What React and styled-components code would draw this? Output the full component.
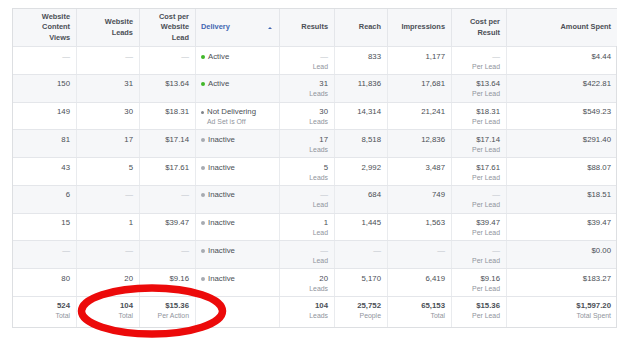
import React from "react";
import styled, { createGlobalStyle } from "styled-components";

const Global = createGlobalStyle`
  html, body { margin: 0; padding: 0; background: #fff; }
  body { font-family: "Liberation Sans", Arial, sans-serif; color: #4b4f56; }
`;

const COLS = "64px 63px 56px 84px 55px 53px 64px 55px 110px";

const Page = styled.div`
  position: relative;
  width: 636px;
  height: 343px;
  padding: 8px 0 0 12px;
  box-sizing: border-box;
`;

const Table = styled.div`
  width: 605px;
  border: 1px solid #dddfe2;
  box-sizing: border-box;
`;

const Row = styled.div`
  display: grid;
  grid-template-columns: ${COLS};
  height: ${(p) => p.$h}px;
  background: ${(p) => (p.$alt ? "#f6f7f9" : "#fff")};
  border-bottom: ${(p) => (p.$last ? "none" : "1px solid #e4e6ea")};
  box-sizing: border-box;
`;

const HeadCell = styled.div`
  display: flex;
  align-items: center;
  justify-content: ${(p) => (p.$left ? "space-between" : "flex-end")};
  text-align: ${(p) => (p.$left ? "left" : "right")};
  padding: 0 6px 0 5px;
  font-size: 7.4px;
  line-height: 10.5px;
  font-weight: bold;
  color: ${(p) => (p.$active ? "#4267b2" : "#4b4f56")};
  border-right: ${(p) => (p.$last ? "none" : "1px solid #e4e6ea")};
  background: #f6f7f9;
`;

const Cell = styled.div`
  display: flex;
  flex-direction: column;
  align-items: ${(p) => (p.$left ? "flex-start" : "flex-end")};
  padding: ${(p) => (p.$total ? 4 : 4.5)}px 6px 0 5px;
  border-right: ${(p) => (p.$last ? "none" : "1px solid #e9ebee")};
  box-sizing: border-box;
  min-width: 0;
`;

const Main = styled.span`
  font-size: 7.8px;
  line-height: 10px;
  font-weight: ${(p) => (p.$bold ? "bold" : "normal")};
  color: ${(p) => (p.$dash ? "#bec3c9" : "#4b4f56")};
  white-space: nowrap;
`;

const Sub = styled.span`
  font-size: 6.9px;
  line-height: 9px;
  color: #90949c;
  white-space: nowrap;
`;

const Status = styled.span`
  display: flex;
  align-items: center;
  gap: 3px;
  font-size: 7.8px;
  line-height: 10px;
  color: #4b4f56;
  white-space: nowrap;
`;

const Dot = styled.span`
  flex: none;
  width: ${(p) => (p.$small ? 3 : 4)}px;
  height: ${(p) => (p.$small ? 3 : 4)}px;
  border-radius: 50%;
  background: ${(p) => p.$color};
`;

const StatusSub = styled(Sub)`
  padding-left: 6px;
`;

const Caret = styled.span`
  width: 0;
  height: 0;
  border-left: 2px solid transparent;
  border-right: 2px solid transparent;
  border-bottom: 2.5px solid #4267b2;
  margin-right: 1px;
`;

const Ring = styled.svg`
  position: absolute;
  left: 76px;
  top: 283px;
  width: 152px;
  height: 56px;
  overflow: visible;
`;

const headers = [
  ["Website", "Content", "Views"],
  ["Website", "Leads"],
  ["Cost per", "Website", "Lead"],
  ["Delivery"],
  ["Results"],
  ["Reach"],
  ["Impressions"],
  ["Cost per", "Result"],
  ["Amount Spent"],
];

const D = "—";
const rows = [
  [D, D, D, "active", [D, "Lead"], "833", "1,177", [D, "Per Lead"], "$4.44"],
  ["150", "31", "$13.64", "active", ["31", "Leads"], "11,836", "17,681", ["$13.64", "Per Lead"], "$422.81"],
  ["149", "30", "$18.31", "off", ["30", "Leads"], "14,314", "21,241", ["$18.31", "Per Lead"], "$549.23"],
  ["81", "17", "$17.14", "inactive", ["17", "Leads"], "8,518", "12,836", ["$17.14", "Per Lead"], "$291.40"],
  ["43", "5", "$17.61", "inactive", ["5", "Leads"], "2,992", "3,487", ["$17.61", "Per Lead"], "$88.07"],
  ["6", D, D, "inactive", [D, "Lead"], "684", "749", [D, "Per Lead"], "$18.51"],
  ["15", "1", "$39.47", "inactive", ["1", "Lead"], "1,445", "1,563", ["$39.47", "Per Lead"], "$39.47"],
  [D, D, D, "inactive", [D, "Lead"], D, D, [D, "Per Lead"], "$0.00"],
  ["80", "20", "$9.16", "inactive", ["20", "Leads"], "5,170", "6,419", ["$9.16", "Per Lead"], "$183.27"],
];

const totals = [
  ["524", "Total"],
  ["104", "Total"],
  ["$15.36", "Per Action"],
  null,
  ["104", "Leads"],
  ["25,752", "People"],
  ["65,153", "Total"],
  ["$15.36", "Per Lead"],
  ["$1,597.20", "Total Spent"],
];

function StatusCell({ kind }) {
  if (kind === "active")
    return (
      <Status>
        <Dot $color="#42b72a" />
        Active
      </Status>
    );
  if (kind === "off")
    return (
      <>
        <Status>
          <Dot $small $color="#7f8389" />
          Not Delivering
        </Status>
        <StatusSub>Ad Set is Off</StatusSub>
      </>
    );
  return (
    <Status>
      <Dot $color="#a7abb1" />
      Inactive
    </Status>
  );
}

function Value({ v }) {
  if (Array.isArray(v))
    return (
      <>
        <Main $dash={v[0] === D}>{v[0]}</Main>
        <Sub>{v[1]}</Sub>
      </>
    );
  return <Main $dash={v === D}>{v}</Main>;
}

export default function App() {
  return (
    <Page>
      <Global />
      <Table>
        <Row $h={38}>
          {headers.map((h, i) => (
            <HeadCell key={i} $left={i === 3} $active={i === 3} $last={i === 8}>
              <span>
                {h.map((l, j) => (
                  <React.Fragment key={j}>
                    {j > 0 && <br />}
                    {l}
                  </React.Fragment>
                ))}
              </span>
              {i === 3 && <Caret />}
            </HeadCell>
          ))}
        </Row>
        {rows.map((r, ri) => (
          <Row key={ri} $h={27.78} $alt={ri % 2 === 1}>
            {r.map((v, ci) => (
              <Cell key={ci} $left={ci === 3} $last={ci === 8}>
                {ci === 3 ? <StatusCell kind={v} /> : <Value v={v} />}
              </Cell>
            ))}
          </Row>
        ))}
        <Row $h={30} $last>
          {totals.map((t, ci) => (
            <Cell key={ci} $total $last={ci === 8}>
              {t && (
                <>
                  <Main $bold>{t[0]}</Main>
                  <Sub>{t[1]}</Sub>
                </>
              )}
            </Cell>
          ))}
        </Row>
      </Table>
      <Ring viewBox="0 0 152 56">
        <ellipse cx="76" cy="28" rx="70.5" ry="23" fill="none" stroke="#ec0a0a" strokeWidth="7.5" />
      </Ring>
    </Page>
  );
}
